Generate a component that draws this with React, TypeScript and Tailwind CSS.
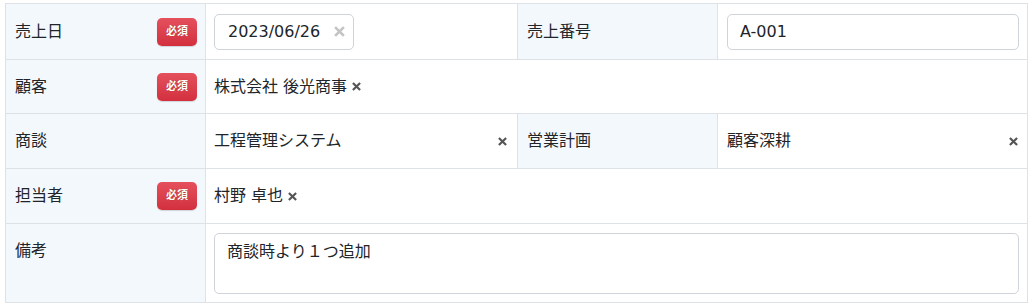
import { ReactNode } from "react";

const font = "font-['DejaVu_Sans','Noto_Sans_CJK_JP',sans-serif]";

function Required() {
  return (
    <span className="inline-flex h-[28px] w-[40px] items-center justify-center rounded-[5px] bg-gradient-to-b from-[#e4505c] to-[#d32f3e] text-[11px] font-bold text-white shadow-[0_1px_1px_rgba(0,0,0,0.15)] [text-shadow:0_0_1px_rgba(0,0,0,0.4)]">
      必須
    </span>
  );
}

function ClearX({ className = "" }: { className?: string }) {
  return (
    <svg viewBox="0 0 10 10" className={className} fill="none" stroke="currentColor" strokeWidth="2.4" strokeLinecap="butt">
      <path d="M1 1 L9 9 M9 1 L1 9" />
    </svg>
  );
}

function Label({ text, required, top }: { text: string; required?: boolean; top?: boolean }) {
  return (
    <div
      className={`flex w-[200px] shrink-0 justify-between border-r border-[#dee2e6] bg-[#f3f8fd] pl-[9px] pr-[8px] ${
        top ? "items-start pt-[15px]" : "items-center"
      }`}
    >
      <span>{text}</span>
      {required && <Required />}
    </div>
  );
}

function Row({ h, children, last }: { h: string; children: ReactNode; last?: boolean }) {
  return <div className={`flex ${h} ${last ? "" : "border-b border-[#dee2e6]"}`}>{children}</div>;
}

function Tag({ text }: { text: string }) {
  return (
    <span className="inline-flex items-center gap-[5px]">
      {text}
      <ClearX className="h-[9px] w-[9px] text-[#555]" />
    </span>
  );
}

export default function App() {
  return (
    <div className={`min-h-[307px] bg-white pt-[3px] pl-[5px] text-[16px] leading-[24px] text-[#212529] ${font}`}>
      <div className="w-[1023px] border border-[#dee2e6]">
        {/* 売上日 / 売上番号 */}
        <Row h="h-[56px]">
          <Label text="売上日" required />
          <div className="flex w-[312px] shrink-0 items-center border-r border-[#dee2e6] px-[8px]">
            <div className="flex h-[36px] w-[140px] items-center justify-between rounded-[5px] border border-[#ced4da] pl-[13px] pr-[8px]">
              <span>2023/06/26</span>
              <ClearX className="h-[11px] w-[11px] text-[#c4c4c4]" />
            </div>
          </div>
          <Label text="売上番号" />
          <div className="flex flex-1 items-center pl-[9px] pr-[8px]">
            <div className="flex h-[36px] w-full items-center rounded-[5px] border border-[#ced4da] px-[12px]">
              A-001
            </div>
          </div>
        </Row>

        {/* 顧客 */}
        <Row h="h-[54px]">
          <Label text="顧客" required />
          <div className="flex flex-1 items-center px-[8px]">
            <Tag text="株式会社 後光商事" />
          </div>
        </Row>

        {/* 商談 / 営業計画 */}
        <Row h="h-[55px]">
          <Label text="商談" />
          <div className="flex w-[312px] shrink-0 items-center justify-between border-r border-[#dee2e6] pl-[8px] pr-[10px]">
            <span>工程管理システム</span>
            <ClearX className="h-[9px] w-[9px] text-[#555]" />
          </div>
          <Label text="営業計画" />
          <div className="flex flex-1 items-center justify-between pl-[9px] pr-[9px]">
            <span>顧客深耕</span>
            <ClearX className="h-[9px] w-[9px] text-[#555]" />
          </div>
        </Row>

        {/* 担当者 */}
        <Row h="h-[55px]">
          <Label text="担当者" required />
          <div className="flex flex-1 items-center px-[8px]">
            <Tag text="村野 卓也" />
          </div>
        </Row>

        {/* 備考 */}
        <Row h="h-[78px]" last>
          <Label text="備考" top />
          <div className="flex-1 pt-[9px] pl-[8px] pr-[8px]">
            <div className="h-[61px] w-full rounded-[5px] border border-[#ced4da] px-[12px] pt-[6px]">
              商談時より１つ追加
            </div>
          </div>
        </Row>
      </div>
    </div>
  );
}
